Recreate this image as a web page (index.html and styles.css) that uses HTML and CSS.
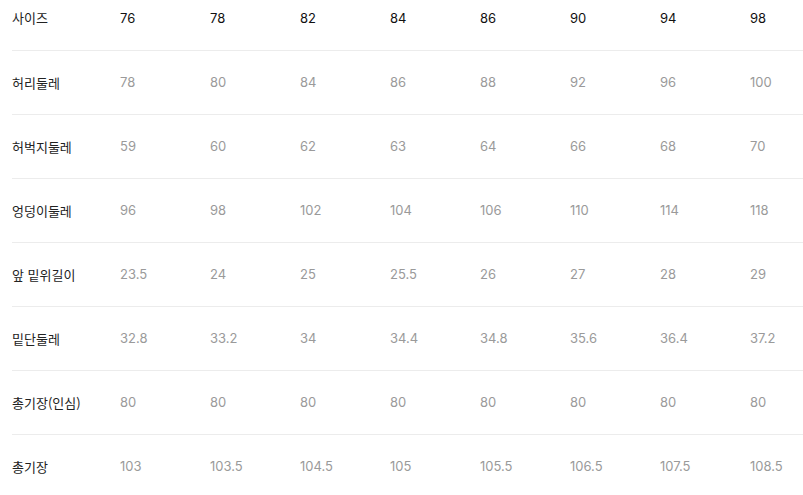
FILE: index.html
```html
<!DOCTYPE html>
<html lang="ko">
<head>
<meta charset="utf-8">
<link rel="stylesheet" href="styles.css">
</head>
<body>
<table class="size-table">
  <colgroup>
    <col class="col-label">
    <col class="col-val"><col class="col-val"><col class="col-val"><col class="col-val">
    <col class="col-val"><col class="col-val"><col class="col-val"><col class="col-last">
  </colgroup>
  <tbody>
    <tr class="head"><th>사이즈</th><td>76</td><td>78</td><td>82</td><td>84</td><td>86</td><td>90</td><td>94</td><td>98</td></tr>
    <tr><th>허리둘레</th><td>78</td><td>80</td><td>84</td><td>86</td><td>88</td><td>92</td><td>96</td><td>100</td></tr>
    <tr><th>허벅지둘레</th><td>59</td><td>60</td><td>62</td><td>63</td><td>64</td><td>66</td><td>68</td><td>70</td></tr>
    <tr><th>엉덩이둘레</th><td>96</td><td>98</td><td>102</td><td>104</td><td>106</td><td>110</td><td>114</td><td>118</td></tr>
    <tr><th>앞 밑위길이</th><td>23.5</td><td>24</td><td>25</td><td>25.5</td><td>26</td><td>27</td><td>28</td><td>29</td></tr>
    <tr><th>밑단둘레</th><td>32.8</td><td>33.2</td><td>34</td><td>34.4</td><td>34.8</td><td>35.6</td><td>36.4</td><td>37.2</td></tr>
    <tr><th>총기장(인심)</th><td>80</td><td>80</td><td>80</td><td>80</td><td>80</td><td>80</td><td>80</td><td>80</td></tr>
    <tr><th>총기장</th><td>103</td><td>103.5</td><td>104.5</td><td>105</td><td>105.5</td><td>106.5</td><td>107.5</td><td>108.5</td></tr>
  </tbody>
</table>
</body>
</html>
```
FILE: styles.css
```css
html, body {
  margin: 0;
  padding: 0;
  overflow: hidden;
  background: #fff;
}
body {
  font-family: Inter, "Noto Sans CJK KR", sans-serif;
  font-size: 13px;
}
.size-table {
  border-collapse: collapse;
  table-layout: fixed;
  width: 791px;
  margin: -14px 0 0 12px;
}
.col-label { width: 108px; }
.col-val { width: 90px; }
.col-last { width: 53px; }
.size-table tr {
  height: 64px;
  border-bottom: 1px solid #ececec;
}
.size-table th {
  padding: 0;
  text-align: left;
  font-weight: 400;
  font-family: "Noto Sans CJK KR", sans-serif;
  color: #222;
  font-size: 13px;
}
.size-table td {
  padding: 0;
  text-align: left;
  color: #9a9a9a;
  white-space: nowrap;
}
.size-table tr.head td {
  color: #111;
}
```
